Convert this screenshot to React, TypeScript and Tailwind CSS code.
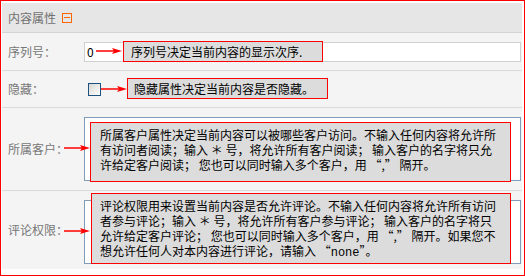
import React from "react";

const cjk = { fontFamily: '"Noto Sans CJK SC", "Noto Sans", sans-serif' };

function Arrow() {
  return (
    <svg width="26" height="8" viewBox="0 0 26 8">
      <line x1="0" y1="4" x2="20" y2="4" stroke="#ff0000" strokeWidth="1.5" />
      <polygon points="16,1 26,4 16,7 18,4" fill="#ff0000" />
    </svg>
  );
}

function Callout({ lines, className }: { lines: React.ReactNode[]; className: string }) {
  return (
    <div
      className={"absolute bg-[#dcdcdc] border border-[#ff0000] text-[12px] leading-[15px] text-black " + className}
    >
      {lines.map((l, i) => (
        <div key={i} className="whitespace-nowrap">
          {l}
        </div>
      ))}
    </div>
  );
}

export default function App() {
  return (
    <div className="w-[525px] h-[276px] border border-[#ff0000] bg-white" style={cjk}>
      <div className="mt-[2px] ml-[1px] w-[520px]">
        {/* header */}
        <div className="h-[30px] bg-[#e6e6e6] border-b border-[#d4d4d4] flex items-center pl-[6px] text-[12px] text-[#707070]">
          <span>内容属性</span>
          <span className="ml-[6px] w-[10px] h-[10px] border border-[#ff6600] flex items-center justify-center">
            <span className="w-[6px] h-[1px] bg-[#ff6600]" />
          </span>
        </div>

        {/* row 1 */}
        <div className="relative h-[38px] bg-[#f4f4f4] border-b border-[#dadada] flex items-center">
          <div className="w-[82px] pl-[6px] text-[12px] text-[#777]">序列号：</div>
          <div className="flex-1 mr-[1px] h-[20px] bg-white border border-[#d0d0d0] flex items-center pl-[2px] text-[12px] text-black">
            0
          </div>
          <div className="absolute left-[94px] top-[14px] flex">
            <Arrow />
          </div>
          <Callout
            className="left-[121px] top-[8px] w-[200px] h-[21px] pl-[7px] pt-[2px]"
            lines={["序列号决定当前内容的显示次序."]}
          />
        </div>

        {/* row 2 */}
        <div className="relative h-[37px] bg-[#f4f4f4] border-b border-[#dadada] flex items-center">
          <div className="w-[82px] pl-[6px] text-[12px] text-[#777]">隐藏：</div>
          <div className="ml-[4px] w-[13px] h-[13px] border border-[#1c5180] bg-gradient-to-br from-[#d8d8d2] to-white" />
          <div className="absolute left-[99px] top-[14px] flex">
            <Arrow />
          </div>
          <Callout
            className="left-[125px] top-[7px] w-[201px] h-[21px] pl-[6px] pt-[2px]"
            lines={["隐藏属性决定当前内容是否隐藏。"]}
          />
        </div>

        {/* row 3 */}
        <div className="relative h-[83px] bg-[#f4f4f4] border-b border-[#dadada] flex items-center">
          <div className="w-[82px] pl-[6px] text-[12px] text-[#777]">所属客户：</div>
          <div className="flex-1 mr-[1px] h-[64px] bg-white border border-[#7f9db9]" />
          <div className="absolute left-[62px] top-[36px] flex">
            <Arrow />
          </div>
          <Callout
            className="left-[88px] top-[14px] w-[421px] h-[60px] pl-[9px] pt-[4px]"
            lines={[
              "所属客户属性决定当前内容可以被哪些客户访问。不输入任何内容将允许所",
              "有访问者阅读；输入 ＊ 号，将允许所有客户阅读； 输入客户的名字将只允",
              "许给定客户阅读； 您也可以同时输入多个客户，用 “,” 隔开。",
            ]}
          />
        </div>

        {/* row 4 */}
        <div className="relative h-[78px] bg-[#f4f4f4] flex items-start">
          <div className="w-[82px] pl-[6px] text-[12px] text-[#777] self-center">评论权限：</div>
          <div className="flex-1 mr-[1px] mt-[9px] h-[64px] bg-white border border-[#7f9db9]" />
          <div className="absolute left-[62px] top-[36px] flex">
            <Arrow />
          </div>
          <Callout
            className="left-[89px] top-[2px] w-[420px] h-[71px] pl-[8px] pt-[4px]"
            lines={[
              "评论权限用来设置当前内容是否允许评论。不输入任何内容将允许所有访问",
              "者参与评论；输入 ＊ 号，将允许所有客户参与评论； 输入客户的名字将只",
              "允许给定客户评论； 您也可以同时输入多个客户，用 “,” 隔开。如果您不",
              <>
                想允许任何人对本内容进行评论，请输入 “
                <span style={{ fontFamily: '"Liberation Mono", monospace' }}>none</span>
                ”。
              </>,
            ]}
          />
        </div>
      </div>
    </div>
  );
}
